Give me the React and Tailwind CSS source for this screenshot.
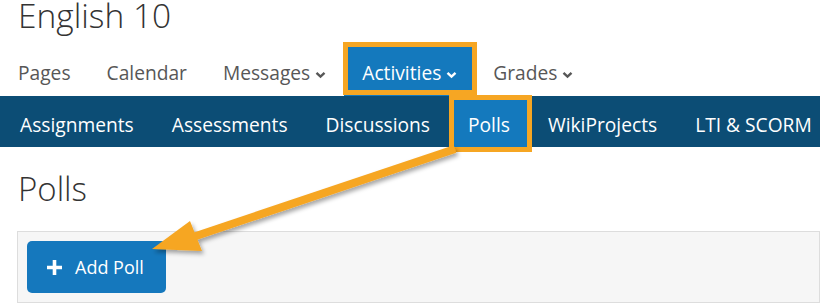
import React from 'react';

const topNav = [
  { name: 'Pages' },
  { name: 'Calendar' },
  { name: 'Messages', menu: true },
  { name: 'Activities', menu: true, current: true },
  { name: 'Grades', menu: true },
];

const subNav = [
  { name: 'Assignments' },
  { name: 'Assessments' },
  { name: 'Discussions' },
  { name: 'Polls', current: true },
  { name: 'WikiProjects' },
  { name: 'LTI & SCORM' },
];

function classNames(...classes) {
  return classes.filter(Boolean).join(' ');
}

const Chevron = () => (
  <svg width="11" height="8" viewBox="0 0 11 8" className="ml-[5px] mt-[3px]">
    <polyline points="1.5,1.8 5.5,5.6 9.5,1.8" fill="none" stroke="currentColor" strokeWidth="2.4" />
  </svg>
);

const Arrow = () => (
  <svg className="pointer-events-none absolute inset-0" width="820" height="304" viewBox="0 0 820 304">
    <defs>
      <filter id="shadow" x="-10%" y="-10%" width="130%" height="140%">
        <feDropShadow dx="2" dy="3" stdDeviation="2" floodColor="#000" floodOpacity="0.35" />
      </filter>
    </defs>
    <g filter="url(#shadow)" fill="#f6a623">
      <line x1="455" y1="149" x2="190" y2="238" stroke="#f6a623" strokeWidth="8" />
      <polygon points="152,249 190,221 202,251" />
    </g>
  </svg>
);

export default function App() {
  return (
    <div className="relative h-[304px] w-[820px] overflow-hidden bg-white font-['Open_Sans',sans-serif]">
      <h1 className="pl-[18px] text-[33.5px] font-light leading-[30px] text-[#333]">English 10</h1>

      <nav className="mt-[14px] flex h-[52px]">
        {topNav.map((item) => (
          <div
            key={item.name}
            className={classNames(
              item.current ? 'bg-[#1479bd] text-white' : 'text-[#575757]',
              'flex h-[52px] shrink-0 items-start whitespace-nowrap px-[18px] pt-[16px] text-[19.2px] leading-[26px]'
            )}
          >
            <span>{item.name}</span>
            {item.menu && <span className="flex h-[26px] items-center"><Chevron /></span>}
          </div>
        ))}
      </nav>

      <nav className="flex h-[51px] bg-[#0c4d75] pl-px">
        {subNav.map((item) => (
          <div
            key={item.name}
            className={classNames(
              item.current && 'bg-[#1479bd]',
              'h-[51px] shrink-0 whitespace-nowrap px-[19px] pt-[16px] text-[19.2px] leading-[26px] text-white'
            )}
          >
            {item.name}
          </div>
        ))}
      </nav>

      <h2 className="mt-[24px] pl-[18px] text-[33px] font-light leading-[36px] text-[#333]">Polls</h2>

      <div className="ml-[17px] mt-[24px] border border-[#dddddd] bg-[#f6f6f6] p-[9px]">
        <button className="flex h-[52px] w-[139px] items-center rounded-[5px] bg-[#1578bd] pl-[20px] text-[18px] text-white">
          <svg width="15" height="15" viewBox="0 0 15 15" className="mr-[13px]">
            <path d="M7.5 0v15M0 7.5h15" stroke="white" strokeWidth="3.6" />
          </svg>
          Add Poll
        </button>
      </div>

      <div className="pointer-events-none absolute left-[343px] top-[42px] h-[53px] w-[134px] border-[5px] border-[#f6a623]" />
      <div className="pointer-events-none absolute left-[449px] top-[95px] h-[57px] w-[83px] border-[5px] border-[#f6a623]" />

      <Arrow />
    </div>
  );
}
